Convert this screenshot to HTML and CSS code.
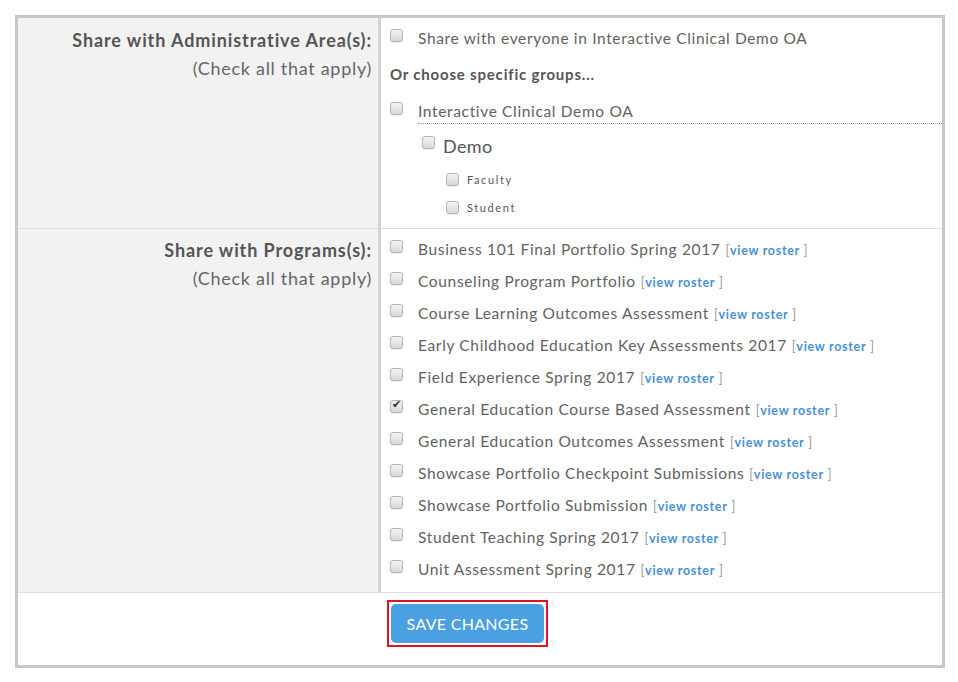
FILE: index.html
```html
<!DOCTYPE html>
<html lang="en">
<head>
  <meta charset="UTF-8" />
  <meta name="viewport" content="width=device-width, initial-scale=1.0" />
  <title>Share Settings</title>
  <link rel="stylesheet" href="styles.css">
</head>
<body>

  <form class="panel">
    <div class="row">
      <div class="label-cell">
        <p class="label">Share with Administrative Area(s):</p>
        <p class="hint">(Check all that apply)</p>
      </div>
      <div class="field-cell admin">
        <label class="item">
          <input type="checkbox" />
          <span>Share with everyone in Interactive Clinical Demo OA</span>
        </label>
        <p class="choose">Or choose specific groups...</p>
        <label class="item group">
          <input type="checkbox" />
          <span class="dotted">Interactive Clinical Demo OA</span>
        </label>
        <label class="item sub">
          <input type="checkbox" />
          <span>Demo</span>
        </label>
        <div class="subs">
          <label class="item subsub">
            <input type="checkbox" />
            <span>Faculty</span>
          </label>
          <label class="item subsub">
            <input type="checkbox" />
            <span>Student</span>
          </label>
        </div>
      </div>
    </div>

    <div class="row">
      <div class="label-cell programs-label">
        <p class="label">Share with Programs(s):</p>
        <p class="hint">(Check all that apply)</p>
      </div>
      <div class="field-cell programs">
        <label class="item"><input type="checkbox" /><span>Business 101 Final Portfolio Spring 2017</span><span class="roster">[<a href="#">view roster</a> ]</span></label>
        <label class="item"><input type="checkbox" /><span>Counseling Program Portfolio</span><span class="roster">[<a href="#">view roster</a> ]</span></label>
        <label class="item"><input type="checkbox" /><span>Course Learning Outcomes Assessment</span><span class="roster">[<a href="#">view roster</a> ]</span></label>
        <label class="item"><input type="checkbox" /><span>Early Childhood Education Key Assessments 2017</span><span class="roster">[<a href="#">view roster</a> ]</span></label>
        <label class="item"><input type="checkbox" /><span>Field Experience Spring 2017</span><span class="roster">[<a href="#">view roster</a> ]</span></label>
        <label class="item"><input type="checkbox" checked /><span>General Education Course Based Assessment</span><span class="roster">[<a href="#">view roster</a> ]</span></label>
        <label class="item"><input type="checkbox" /><span>General Education Outcomes Assessment</span><span class="roster">[<a href="#">view roster</a> ]</span></label>
        <label class="item"><input type="checkbox" /><span>Showcase Portfolio Checkpoint Submissions</span><span class="roster">[<a href="#">view roster</a> ]</span></label>
        <label class="item"><input type="checkbox" /><span>Showcase Portfolio Submission</span><span class="roster">[<a href="#">view roster</a> ]</span></label>
        <label class="item"><input type="checkbox" /><span>Student Teaching Spring 2017</span><span class="roster">[<a href="#">view roster</a> ]</span></label>
        <label class="item"><input type="checkbox" /><span>Unit Assessment Spring 2017</span><span class="roster">[<a href="#">view roster</a> ]</span></label>
      </div>
    </div>

    <div class="actions">
      <span class="highlight">
        <button type="button" class="save">Save Changes</button>
      </span>
    </div>
  </form>

</body>
</html>
```

FILE: styles.css
```css
:root {
  --borde: #c8c8c8;
  --linea: #dedede;
  --fondo-gris: #f2f2f2;
  --texto: #626262;
  --azul: #4a90d9;
  --boton: #4ba0e2;
  --fuente: 'Lato', 'Open Sans', sans-serif;
}

* {
  margin: 0;
  padding: 0;
  box-sizing: border-box;
  font-family: var(--fuente);
}

body {
  background: #fff;
  color: var(--texto);
  padding: 15px;
}

.panel {
  width: 930px;
  border: 3px solid var(--borde);
  background: #fff;
}

.row {
  display: grid;
  grid-template-columns: 363px 1fr;
  border-bottom: 1px solid var(--linea);
}

.label-cell {
  background: var(--fondo-gris);
  border-right: 3px solid #d2d2d2;
  text-align: right;
  padding: 8px 6px 0 0;
  line-height: 28px;
}

.programs-label {
  padding-top: 7px;
}

.label {
  font-size: 18px;
  font-weight: bold;
  color: #555;
  letter-spacing: 0.9px;
}

.hint {
  font-size: 18px;
  color: #666;
  letter-spacing: 0.7px;
}

.field-cell {
  padding-left: 9px;
}

.admin {
  padding-top: 4px;
  padding-bottom: 7px;
}

.programs {
  padding-top: 4px;
  padding-bottom: 7px;
}

.item {
  display: flex;
  align-items: center;
  height: 32px;
  font-size: 15.5px;
  letter-spacing: 0.65px;
  color: var(--texto);
  cursor: pointer;
}

.item input {
  appearance: none;
  -webkit-appearance: none;
  width: 13px;
  height: 13px;
  border: 1px solid #b4b4b4;
  border-radius: 3px;
  background: linear-gradient(#f4f4f4, #d8d8d8);
  box-shadow: 0 1px 1px rgba(0, 0, 0, 0.08);
  margin-right: 15px;
  margin-top: -6px;
  flex-shrink: 0;
  position: relative;
}

.item input:checked::after {
  content: "✔";
  position: absolute;
  left: 1px;
  top: -3px;
  font-size: 11px;
  color: #333;
  font-family: 'DejaVu Sans', sans-serif;
}

.choose {
  font-size: 15px;
  font-weight: bold;
  color: #555;
  line-height: 20px;
  margin-top: 10px;
  letter-spacing: 0.8px;
}

.group {
  height: 24px;
  margin-top: 14px;
}

.dotted {
  flex: 1;
  line-height: 24px;
  border-bottom: 1px dotted #999;
  margin-top: 2px;
}

.group input {
  margin-top: -4px;
}

.sub {
  padding-left: 32px;
  height: 32px;
  margin-top: 8px;
  font-size: 18px;
  letter-spacing: 0.4px;
  color: #555;
}

.sub input {
  margin-right: 8px;
  margin-top: -8px;
}

.subs {
  padding-top: 3px;
}

.subsub {
  padding-left: 56px;
  height: 28px;
  font-size: 11px;
  letter-spacing: 1.6px;
  color: #555;
}

.subsub input {
  margin-right: 8px;
  margin-top: 0;
}

.roster {
  font-size: 12.5px;
  color: #999;
  margin-left: 5px;
  margin-top: 2px;
  letter-spacing: 0.7px;
}

.roster a {
  color: var(--azul);
  font-weight: bold;
  text-decoration: none;
}

.actions {
  padding: 7px 25px 18px 0;
  text-align: center;
}

.highlight {
  display: inline-block;
  border: 2px solid #e0131f;
  padding: 2px;
}

.save {
  display: block;
  height: 39px;
  padding: 0 16px;
  border: none;
  border-radius: 5px;
  background: var(--boton);
  color: #fff;
  font-size: 16px;
  letter-spacing: 0.3px;
  text-transform: uppercase;
  cursor: pointer;
}
```
